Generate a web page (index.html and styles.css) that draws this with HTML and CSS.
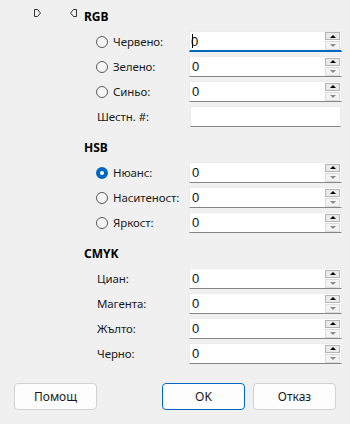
FILE: index.html
```html
<!DOCTYPE html>
<html lang="bg">
<head>
    <meta charset="UTF-8">
    <meta name="viewport" content="width=device-width, initial-scale=1.0">
    <title>Избор на цвят</title>
    <link rel="stylesheet" href="styles.css">
</head>
<body>

<div class="dialog">
    <div class="picker">
        <div class="slider-arrows">
            <svg class="arrow" width="8" height="8" viewBox="0 0 8 8"><path d="M0.5 0.5H3.5L6.5 4L3.5 7.5H0.5Z"/></svg>
            <svg class="arrow" width="8" height="8" viewBox="0 0 8 8"><path d="M7.5 0.5H4.5L1.5 4L4.5 7.5H7.5Z"/></svg>
        </div>

        <div class="values">
            <section class="group">
                <h2>RGB</h2>
                <div class="row">
                    <label class="opt"><span class="radio"></span>Червено:</label>
                    <div class="field focused">
                        <span class="val"><span class="caret"></span>0</span>
                        <span class="spin"><span class="up"></span><span class="down"></span></span>
                    </div>
                </div>
                <div class="row">
                    <label class="opt"><span class="radio"></span>Зелено:</label>
                    <div class="field">
                        <span class="val">0</span>
                        <span class="spin"><span class="up"></span><span class="down"></span></span>
                    </div>
                </div>
                <div class="row">
                    <label class="opt"><span class="radio"></span>Синьо:</label>
                    <div class="field">
                        <span class="val">0</span>
                        <span class="spin"><span class="up"></span><span class="down"></span></span>
                    </div>
                </div>
                <div class="row">
                    <label class="plain">Шестн. #:</label>
                    <div class="field hex"><span class="val"></span></div>
                </div>
            </section>

            <section class="group">
                <h2>HSB</h2>
                <div class="row">
                    <label class="opt"><span class="radio checked"></span>Нюанс:</label>
                    <div class="field">
                        <span class="val">0</span>
                        <span class="spin"><span class="up"></span><span class="down"></span></span>
                    </div>
                </div>
                <div class="row">
                    <label class="opt"><span class="radio"></span>Наситеност:</label>
                    <div class="field">
                        <span class="val">0</span>
                        <span class="spin"><span class="up"></span><span class="down"></span></span>
                    </div>
                </div>
                <div class="row">
                    <label class="opt"><span class="radio"></span>Яркост:</label>
                    <div class="field">
                        <span class="val">0</span>
                        <span class="spin"><span class="up"></span><span class="down"></span></span>
                    </div>
                </div>
            </section>

            <section class="group">
                <h2>CMYK</h2>
                <div class="row">
                    <label class="plain">Циан:</label>
                    <div class="field">
                        <span class="val">0</span>
                        <span class="spin"><span class="up"></span><span class="down"></span></span>
                    </div>
                </div>
                <div class="row">
                    <label class="plain">Магента:</label>
                    <div class="field">
                        <span class="val">0</span>
                        <span class="spin"><span class="up"></span><span class="down"></span></span>
                    </div>
                </div>
                <div class="row">
                    <label class="plain">Жълто:</label>
                    <div class="field">
                        <span class="val">0</span>
                        <span class="spin"><span class="up"></span><span class="down"></span></span>
                    </div>
                </div>
                <div class="row">
                    <label class="plain">Черно:</label>
                    <div class="field">
                        <span class="val">0</span>
                        <span class="spin"><span class="up"></span><span class="down"></span></span>
                    </div>
                </div>
            </section>
        </div>
    </div>

    <div class="buttons">
        <button class="btn">Помощ</button>
        <button class="btn btn-default">OK</button>
        <button class="btn">Отказ</button>
    </div>
</div>

</body>
</html>
```

FILE: styles.css
```css
body {
    margin: 0;
    background-color: #f0f0f0;
    font-family: "Noto Sans", "Open Sans", sans-serif;
    font-size: 11.5px;
    letter-spacing: -0.1px;
    color: #1a1a1a;
}
.dialog {
    width: 350px;
    height: 424px;
}
.picker {
    display: flex;
}
.slider-arrows {
    width: 50px;
    padding: 9px 0 0 34px;
    display: flex;
    gap: 27px;
    align-items: flex-start;
}
.arrow {
    display: block;
    flex: none;
}
.arrow path {
    fill: none;
    stroke: #333333;
    stroke-width: 1;
}
.values {
    flex: 1;
    padding: 8px 8px 0 0;
}
.group + .group {
    margin-top: 12px;
}
.group h2 {
    margin: 0 0 5px;
    height: 18px;
    line-height: 18px;
    font-size: 12px;
    font-weight: bold;
    letter-spacing: 0;
    color: #000;
}
.row {
    display: grid;
    grid-template-columns: 93px 1fr;
    align-items: center;
    height: 21px;
    padding-left: 12px;
}
.row + .row {
    margin-top: 4px;
}
.opt {
    display: flex;
    align-items: center;
    gap: 5px;
    white-space: nowrap;
}
.plain {
    padding-left: 1px;
}
.radio {
    width: 10px;
    height: 10px;
    border: 1px solid #5c5c5c;
    border-radius: 50%;
    background-color: #f5f5f5;
    flex: none;
}
.radio.checked {
    width: 4px;
    height: 4px;
    border: 4px solid #0067c0;
    background-color: #fff;
}
.field {
    display: flex;
    align-items: center;
    height: 21px;
    box-sizing: border-box;
    background-color: #fff;
    border: 1px solid #ebebeb;
    border-bottom: 1px solid #868686;
    padding: 0 1px 0 2px;
}
.field.focused {
    border-bottom: 2px solid #0067c0;
}
.field.hex {
    margin-right: 1px;
    margin-left: 1px;
}
.val {
    flex: 1;
    font-family: "Liberation Sans", Arial, sans-serif;
    font-size: 13px;
    letter-spacing: 0;
    color: #111;
    display: flex;
    align-items: center;
}
.caret {
    display: inline-block;
    height: 14px;
    border-left: 1px solid #000;
    margin-right: -2px;
}
.spin {
    display: flex;
    flex-direction: column;
    gap: 1px;
    width: 15px;
}
.spin span {
    display: flex;
    align-items: center;
    justify-content: center;
    box-sizing: border-box;
    height: 8px;
}
.spin .up {
    background-color: #eaeaea;
    border: 1px solid #b4b4b4;
}
.spin .up::after {
    content: "";
    border-left: 3px solid transparent;
    border-right: 3px solid transparent;
    border-bottom: 3px solid #000;
}
.spin .down {
    height: 9px;
    background-color: #f3f3f3;
    border: 1px solid #dcdcdc;
}
.spin .down::after {
    content: "";
    border-left: 3px solid transparent;
    border-right: 3px solid transparent;
    border-top: 3px solid #8a8a8a;
}
.buttons {
    display: flex;
    gap: 8px;
    padding: 0 14px;
    margin-top: 19px;
}
.btn {
    width: 83px;
    height: 27px;
    font-family: "Noto Sans", "Open Sans", sans-serif;
    font-size: 12px;
    color: #1a1a1a;
    background-color: #fdfdfd;
    border: 1px solid #d2d2d2;
    border-radius: 4px;
    padding: 0;
}
.btn-default {
    margin-left: auto;
    border-color: #0067c0;
}
```
